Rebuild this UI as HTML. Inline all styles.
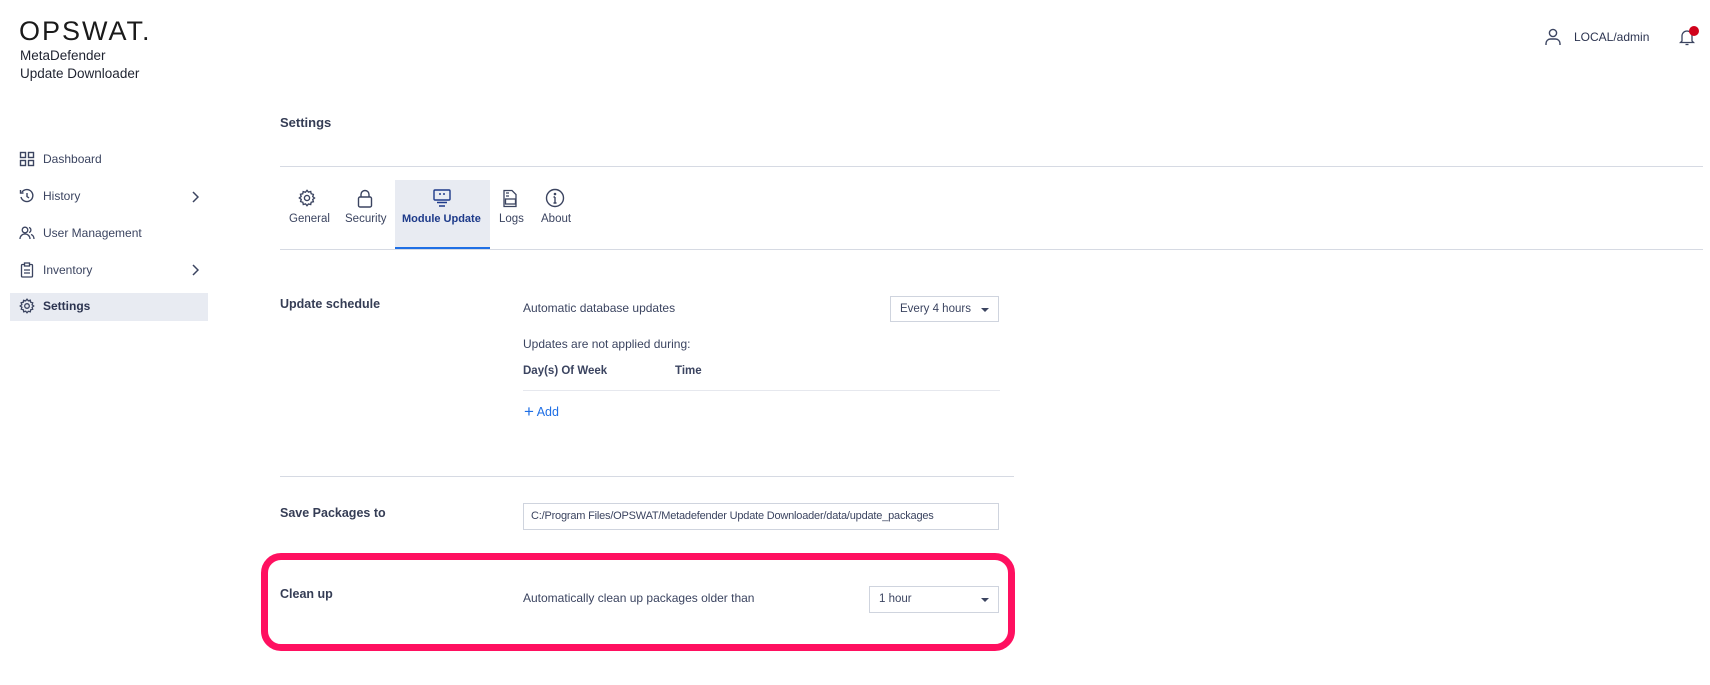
<!DOCTYPE html>
<html><head><meta charset="utf-8"><style>
*{box-sizing:border-box;margin:0;padding:0}
body{width:1710px;height:685px;background:#fff;font-family:"Liberation Sans",sans-serif;color:#3b4460;position:relative;overflow:hidden;font-size:12px}
.a{position:absolute;white-space:nowrap}
.logo{left:19px;top:16px;font-size:27px;letter-spacing:2px;font-weight:300;color:#1a1a1a}
.prod{left:20px;font-size:13.5px;color:#1f2330}
.nav{left:43px;font-size:12px;color:#3b4460}
.ni{left:19px;width:16px;height:16px}
.hl{left:10px;top:293px;width:198px;height:28px;background:#e8ebf2}
.lbl{font-weight:bold;font-size:12.5px;color:#353d55}
.line{position:absolute;height:1px;background:#d6dae3}
.box{position:absolute;border:1px solid #cfd4de;background:#fff;font-size:11.5px;color:#3b4460;padding-left:9px;line-height:24px;overflow:hidden;white-space:nowrap}
.tab{position:absolute;top:213px;font-size:11.5px;color:#3b4460;text-align:center}
.caret{position:absolute;right:9px;top:11px;border-left:4px solid transparent;border-right:4px solid transparent;border-top:4px solid #3b4460}
</style></head><body>
<div class="a logo">OPSWAT.</div>
<div class="a prod" style="top:48px">MetaDefender</div>
<div class="a prod" style="top:66px">Update Downloader</div>

<div class="a hl"></div>
<svg class="a ni" style="top:151px" viewBox="0 0 16 16" fill="none" stroke="#3b4460" stroke-width="1.4"><rect x="1.5" y="1.5" width="5" height="5"/><rect x="9.5" y="1.5" width="5" height="5"/><rect x="1.5" y="9.5" width="5" height="5"/><rect x="9.5" y="9.5" width="5" height="5"/></svg>
<div class="a nav" style="top:152px">Dashboard</div>
<svg class="a ni" style="top:188px" viewBox="0 0 16 16" fill="none" stroke="#3b4460" stroke-width="1.4"><path d="M3 4a6 6 0 1 1-1 5"/><path d="M1.5 2v3h3"/><path d="M8 5v3.5l2 1.5"/></svg>
<div class="a nav" style="top:189px">History</div>
<svg class="a" style="left:191px;top:191px" width="8" height="12" viewBox="0 0 8 12" fill="none" stroke="#3b4460" stroke-width="1.5"><path d="M2 1l5 5-5 5"/></svg>
<svg class="a ni" style="top:225px" viewBox="0 0 16 16" fill="none" stroke="#3b4460" stroke-width="1.3"><circle cx="6" cy="5" r="2.8"/><path d="M1 14c0-3 2.3-5 5-5s5 2 5 5"/><path d="M10 2.5a2.6 2.6 0 0 1 0 5M12 9.5c1.8.6 3 2.3 3 4.5"/></svg>
<div class="a nav" style="top:226px">User Management</div>
<svg class="a ni" style="top:262px" viewBox="0 0 16 16" fill="none" stroke="#3b4460" stroke-width="1.3"><rect x="2.5" y="2.5" width="11" height="12.5" rx="1"/><rect x="5.5" y="1" width="5" height="3" fill="#fff"/><path d="M5 8h6M5 11h6"/></svg>
<div class="a nav" style="top:263px">Inventory</div>
<svg class="a" style="left:191px;top:264px" width="8" height="12" viewBox="0 0 8 12" fill="none" stroke="#3b4460" stroke-width="1.5"><path d="M2 1l5 5-5 5"/></svg>
<svg class="a ni" style="top:298px" viewBox="0 0 16 16" fill="none" stroke="#3b4460" stroke-width="1.3"><circle cx="8" cy="8" r="2.3"/><path d="M8 1.2l1.3 1.6 2-.6.4 2 2 .6-.6 2 1.6 1.2-1.6 1.3.6 2-2 .5-.4 2-2-.5L8 14.8l-1.3-1.6-2 .6-.4-2-2-.6.6-2L1.2 8l1.6-1.3-.6-2 2-.4.4-2 2 .6z"/></svg>
<div class="a nav" style="top:299px;font-weight:bold;color:#2c3450">Settings</div>

<div class="a" style="left:1545px;top:28px"><svg width="16" height="18" viewBox="0 0 16 18" fill="none" stroke="#3b4460" stroke-width="1.4"><circle cx="8" cy="5" r="3.6"/><path d="M1 17v-1.5c0-2.5 2-4.5 4.5-4.5h5c2.5 0 4.5 2 4.5 4.5V17"/></svg></div>
<div class="a" style="left:1574px;top:30px;font-size:12px;color:#2c3450">LOCAL/admin</div>
<div class="a" style="left:1679px;top:28px"><svg width="16" height="18" viewBox="0 0 16 18" fill="none" stroke="#3b4460" stroke-width="1.3"><path d="M3 13V8a5 5 0 0 1 10 0v5l1.5 1.5h-13z"/><path d="M6.5 16.5h3"/></svg></div>
<div class="a" style="left:1689px;top:26px;width:10px;height:10px;border-radius:50%;background:#d0021b"></div>

<div class="a lbl" style="left:280px;top:115px;font-size:13px">Settings</div>
<div class="line" style="left:280px;top:166px;width:1423px"></div>

<div class="a" style="left:395px;top:180px;width:95px;height:69px;background:#e8ebf2"></div>
<div class="a" style="left:395px;top:247px;width:95px;height:3px;background:#1f6fe5"></div>
<div class="line" style="left:280px;top:249px;width:1423px"></div>
<svg class="a" style="left:298px;top:189px" width="18" height="18" viewBox="0 0 16 16" fill="none" stroke="#3b4460" stroke-width="1.2"><circle cx="8" cy="8" r="2.3"/><path d="M8 1.2l1.3 1.6 2-.6.4 2 2 .6-.6 2 1.6 1.2-1.6 1.3.6 2-2 .5-.4 2-2-.5L8 14.8l-1.3-1.6-2 .6-.4-2-2-.6.6-2L1.2 8l1.6-1.3-.6-2 2-.4.4-2 2 .6z"/></svg>
<svg class="a" style="left:356px;top:189px" width="18" height="19" viewBox="0 0 18 19" fill="none" stroke="#3b4460" stroke-width="1.4"><path d="M5 8V5.5a4 4 0 0 1 8 0V8"/><rect x="2.5" y="8" width="13" height="10" rx="1.5"/></svg>
<svg class="a" style="left:432px;top:189px" width="20" height="19" viewBox="0 0 20 19" fill="none" stroke="#1d3a8a" stroke-width="1.4"><rect x="2" y="1" width="16" height="10" rx="1"/><path d="M7 5h2M11 5h2M5 13.5h10M7 17h6"/></svg>
<svg class="a" style="left:501px;top:189px" width="18" height="19" viewBox="0 0 18 19" fill="none" stroke="#3b4460" stroke-width="1.3"><path d="M3 1.5h8l4 4V17.5H3z"/><rect x="4.5" y="10" width="10" height="5" fill="#fff"/><path d="M5 4h3M5 7h3"/></svg>
<svg class="a" style="left:545px;top:188px" width="20" height="20" viewBox="0 0 20 20" fill="none" stroke="#3b4460" stroke-width="1.4"><circle cx="10" cy="10" r="8.5"/><path d="M10 9v6M8.5 15h3M8.5 9H10"/><circle cx="10" cy="6" r=".6" fill="#3b4460"/></svg>
<div class="tab" style="left:289px">General</div>
<div class="tab" style="left:345px">Security</div>
<div class="tab" style="left:402px;font-weight:bold;color:#1d3a8a;font-size:11px">Module Update</div>
<div class="tab" style="left:499px">Logs</div>
<div class="tab" style="left:541px">About</div>

<div class="a lbl" style="left:280px;top:297px">Update schedule</div>
<div class="a" style="left:523px;top:301px">Automatic database updates</div>
<div class="box" style="left:890px;top:296px;width:109px;height:26px">Every 4 hours<span class="caret"></span></div>
<div class="a" style="left:523px;top:337px">Updates are not applied during:</div>
<div class="a" style="left:523px;top:365px;font-weight:bold;font-size:11.5px">Day(s) Of Week</div>
<div class="a" style="left:675px;top:365px;font-weight:bold;font-size:11.5px">Time</div>
<div class="line" style="left:523px;top:390px;width:477px;background:#e6e8ee"></div>
<div class="a" style="left:524px;top:401px;color:#1f6fe5;font-size:12.5px"><span style="font-size:17px;position:relative;top:1px">+</span> Add</div>

<div class="line" style="left:280px;top:476px;width:734px"></div>
<div class="a lbl" style="left:280px;top:506px">Save Packages to</div>
<div class="box" style="left:523px;top:503px;width:476px;height:27px;padding-left:7px;font-size:11px;letter-spacing:-0.2px">C:/Program Files/OPSWAT/Metadefender Update Downloader/data/update_packages</div>

<div class="a lbl" style="left:280px;top:587px">Clean up</div>
<div class="a" style="left:523px;top:591px">Automatically clean up packages older than</div>
<div class="box" style="left:869px;top:586px;width:130px;height:27px">1 hour<span class="caret"></span></div>
<div class="a" style="left:261px;top:553px;width:754px;height:98px;border:7px solid #ff1060;border-radius:20px"></div>
</body></html>
